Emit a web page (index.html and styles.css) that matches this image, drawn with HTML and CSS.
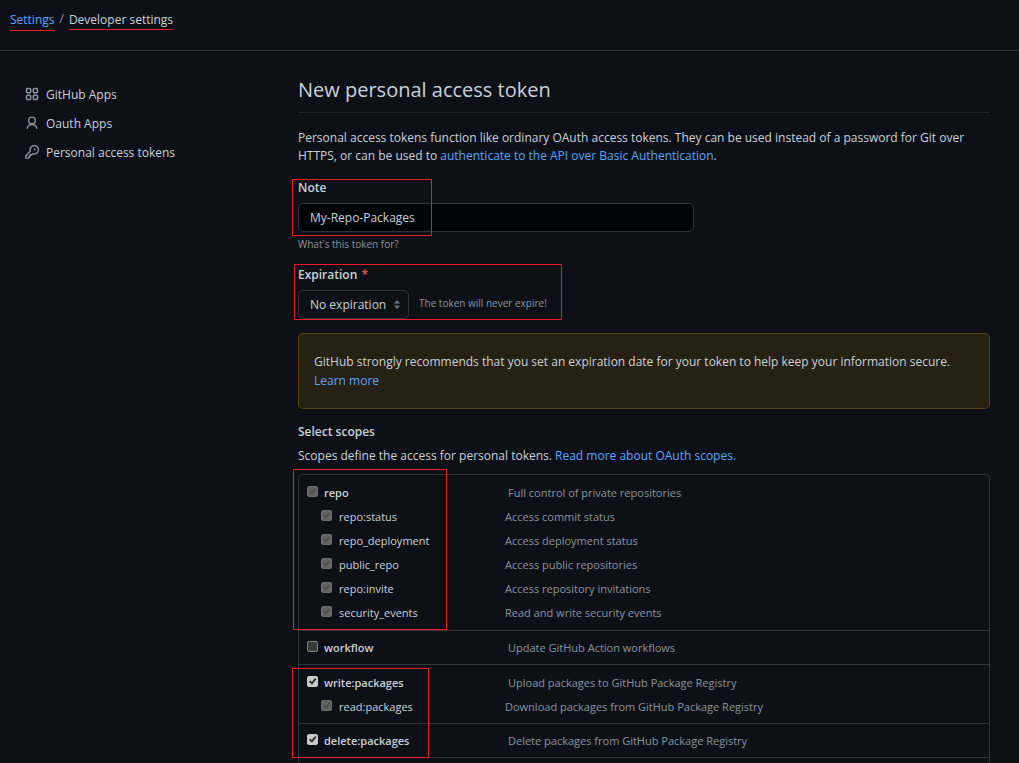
FILE: index.html
```html
<!DOCTYPE html>
<html lang="en">
<head>
<meta charset="utf-8">
<meta name="viewport" content="width=device-width, initial-scale=1">
<title>New personal access token</title>
<link rel="stylesheet" href="styles.css">
</head>
<body>
<header class="topbar">
  <nav class="crumbs" aria-label="Breadcrumb">
    <a class="crumb crumb-link" href="#settings">Settings</a>
    <span class="slash">/</span>
    <span class="crumb crumb-current">Developer settings</span>
  </nav>
</header>
<div class="layout">
  <nav class="sidebar" aria-label="Developer settings">
    <a class="side-link" href="#apps">
      <svg class="icon" viewBox="0 0 16 16" aria-hidden="true"><g fill="none" stroke="currentColor" stroke-width="1.7"><rect x="1.75" y="1.75" width="4.75" height="4.75" rx="1"/><rect x="9.5" y="1.75" width="4.75" height="4.75" rx="1"/><rect x="1.75" y="9.5" width="4.75" height="4.75" rx="1"/><rect x="9.5" y="9.5" width="4.75" height="4.75" rx="1"/></g></svg>
      GitHub Apps
    </a>
    <a class="side-link" href="#oauth">
      <svg class="icon" viewBox="0 0 16 16" aria-hidden="true"><g fill="none" stroke="currentColor" stroke-width="1.6" stroke-linecap="round"><circle cx="8" cy="5" r="3.75"/><path d="M2.5 14.2a5.6 5.6 0 0 1 11 0"/></g></svg>
      Oauth Apps
    </a>
    <a class="side-link" href="#tokens">
      <svg class="icon" viewBox="0 0 16 16" aria-hidden="true"><path fill="none" stroke="currentColor" stroke-width="1.6" stroke-linejoin="round" d="M6.1 7.1a4.8 4.8 0 1 1 2.8 2.8L7.6 11.2H6.2v1.4H4.8v1.4L4 15H1V12.2z"/><circle cx="11" cy="5" r="1" fill="currentColor"/></svg>
      Personal access tokens
    </a>
  </nav>
  <main class="main">
    <h1 class="title">New personal access token</h1>
    <p class="intro">Personal access tokens function like ordinary OAuth access tokens. They can be used instead of a password for Git over HTTPS, or can be used to <a href="#auth">authenticate to the API over Basic Authentication</a>.</p>
    <form class="form">
      <div class="field">
        <span class="mark mark-note"></span>
        <label class="label" for="note">Note</label>
        <input class="text-input" id="note" type="text" value="My-Repo-Packages">
        <p class="hint">What's this token for?</p>
      </div>
      <div class="field">
        <span class="mark mark-expiration"></span>
        <label class="label" for="expiration">Expiration <span class="required">*</span></label>
        <div class="expiration-row">
          <span class="select-wrap">
            <select class="select" id="expiration"><option>No expiration</option></select>
            <svg class="carets" viewBox="0 0 8 10" aria-hidden="true"><path fill="currentColor" d="M4 0l3.5 4h-7zM4 10l3.5-4h-7z"/></svg>
          </span>
          <span class="expire-hint">The token will never expire!</span>
        </div>
      </div>
      <div class="warning">GitHub strongly recommends that you set an expiration date for your token to help keep your information secure. <a class="warning-link" href="#learn">Learn more</a></div>
      <h2 class="subtitle">Select scopes</h2>
      <p class="scopes-intro">Scopes define the access for personal tokens. <a href="#scopes">Read more about OAuth scopes.</a></p>
      <ul class="scopes">
        <li class="scope">
          <span class="mark mark-repo"></span>
          <div class="row row-parent"><label class="check"><input class="box" type="checkbox" checked disabled>repo</label><span class="desc">Full control of private repositories</span></div>
          <div class="row row-child"><label class="check"><input class="box" type="checkbox" checked disabled>repo:status</label><span class="desc">Access commit status</span></div>
          <div class="row row-child"><label class="check"><input class="box" type="checkbox" checked disabled>repo_deployment</label><span class="desc">Access deployment status</span></div>
          <div class="row row-child"><label class="check"><input class="box" type="checkbox" checked disabled>public_repo</label><span class="desc">Access public repositories</span></div>
          <div class="row row-child"><label class="check"><input class="box" type="checkbox" checked disabled>repo:invite</label><span class="desc">Access repository invitations</span></div>
          <div class="row row-child"><label class="check"><input class="box" type="checkbox" checked disabled>security_events</label><span class="desc">Read and write security events</span></div>
        </li>
        <li class="scope scope-single">
          <div class="row row-parent"><label class="check"><input class="box" type="checkbox">workflow</label><span class="desc">Update GitHub Action workflows</span></div>
        </li>
        <li class="scope">
          <span class="mark mark-packages"></span>
          <div class="row row-parent"><label class="check"><input class="box" type="checkbox" checked>write:packages</label><span class="desc">Upload packages to GitHub Package Registry</span></div>
          <div class="row row-child"><label class="check"><input class="box" type="checkbox" checked disabled>read:packages</label><span class="desc">Download packages from GitHub Package Registry</span></div>
        </li>
        <li class="scope scope-single">
          <div class="row row-parent"><label class="check"><input class="box" type="checkbox" checked>delete:packages</label><span class="desc">Delete packages from GitHub Package Registry</span></div>
        </li>
      </ul>
    </form>
  </main>
</div>
</body>
</html>
```
FILE: styles.css
```css
* { box-sizing: border-box; }

body {
  margin: 0;
  height: 100vh;
  overflow: hidden;
  display: flex;
  flex-direction: column;
  background: #0d1117;
  color: #c9d1d9;
  font: 12px/18px "Open Sans", "Noto Sans", sans-serif;
}

a { color: #58a6ff; text-decoration: none; }
h1, h2, p, ul { margin: 0; padding: 0; }

.topbar { padding: 10px 10px 19px; border-bottom: 1px solid #30363d; }
.crumbs { display: flex; gap: 5px; align-items: flex-start; }
.crumb { border-bottom: 1px solid #ed1c24; line-height: 19px; }
.crumb-link { padding-bottom: 1px; }
.slash { color: #8b949e; }

.layout {
  flex: 1;
  min-height: 0;
  display: grid;
  grid-template-columns: 273px minmax(0, 1fr);
  padding: 27px 29px 0 25px;
}

.sidebar { display: flex; flex-direction: column; padding-top: 2px; }
.side-link { display: flex; align-items: center; gap: 7px; height: 29px; color: #c9d1d9; }
.icon { width: 14px; height: 14px; margin-bottom: 2px; color: #8b949e; }

.main, .form { display: flex; flex-direction: column; }
.form { flex: 1; }
.title {
  font-size: 20px;
  font-weight: 400;
  line-height: 24px;
  padding-bottom: 10px;
  border-bottom: 1px solid #21262d;
}
.intro { margin: 16px 0 14px; }

.field { position: relative; display: flex; flex-direction: column; align-items: flex-start; margin-bottom: 13px; }
.label { font-weight: 600; margin-bottom: 6px; }
.required { color: #f85149; margin-left: 1px; }
.text-input, .select {
  height: 29px;
  color: #c9d1d9;
  font: inherit;
  border: 1px solid #30363d;
  border-radius: 5px;
  padding: 0 11px;
  outline: 0;
}
.text-input { width: 396px; max-width: 100%; background: #010409; }
.hint { margin-top: 3px; font-size: 10px; color: #8b949e; }
.expiration-row { display: flex; align-items: center; gap: 10px; margin-bottom: 1px; }
.expire-hint { padding-bottom: 4px; font-size: 10px; color: #8b949e; }
.select-wrap { position: relative; display: flex; }
.select { appearance: none; background: #0d1117; width: 111px; }
.carets { position: absolute; right: 8px; top: 10px; width: 8px; height: 9px; color: #6e7681; pointer-events: none; }

.warning {
  padding: 18px 15px;
  line-height: 19px;
  background: #272115;
  border: 1px solid #5c4311;
  border-radius: 5px;
}
.warning-link { display: table; }
.subtitle { margin: 14px 0 6px; font-size: 12px; font-weight: 600; line-height: 18px; }

.scopes {
  flex: 1;
  margin-top: 9px;
  list-style: none;
  border: 1px solid #30363d;
  border-bottom: 0;
  border-radius: 5px 5px 0 0;
}
.scope { position: relative; padding: 6px 8px 4px; border-bottom: 1px solid #30363d; }
.scope:first-child { padding-bottom: 5px; }
.scope-single { padding-top: 5px; }
.row { display: grid; align-items: center; height: 24px; font-size: 11px; }
.row-parent { grid-template-columns: 201px 1fr; }
.row-parent .check { font-weight: 600; }
.row-child { grid-template-columns: 184px 1fr; padding-left: 14px; }
.check { display: flex; align-items: center; gap: 6px; }
.row-child .check { gap: 7px; }
.desc { color: #8b949e; }

.box {
  appearance: none;
  display: grid;
  place-items: center;
  width: 11px;
  height: 11px;
  margin: 0 0 3px;
  border: 1px solid #858585;
  border-radius: 2px;
  background: #3b3b3b;
}
.box:checked { background: #c9c9c9; border-color: #c9c9c9; }
.box:checked::after {
  content: "";
  width: 9px;
  height: 9px;
  background: #303030;
  clip-path: polygon(10% 52%, 25% 38%, 42% 56%, 78% 12%, 94% 25%, 44% 86%);
}
.box:checked:disabled { background: #636363; border-color: #6b6b6b; }
.box:checked:disabled::after { background: #4c4c4c; }

/* Red highlight frames drawn over the form */
.mark { position: absolute; z-index: 1; border: 1px solid #ed1c24; pointer-events: none; }
.mark-note { left: -6px; top: 0; width: 140px; height: 57px; }
.mark-expiration { left: -4px; top: -2px; width: 268px; height: 56px; }
.mark-repo { left: -6px; top: -6px; width: 154px; bottom: 0; }
.mark-packages { left: -7px; top: 3px; width: 137px; height: 90px; }
```
